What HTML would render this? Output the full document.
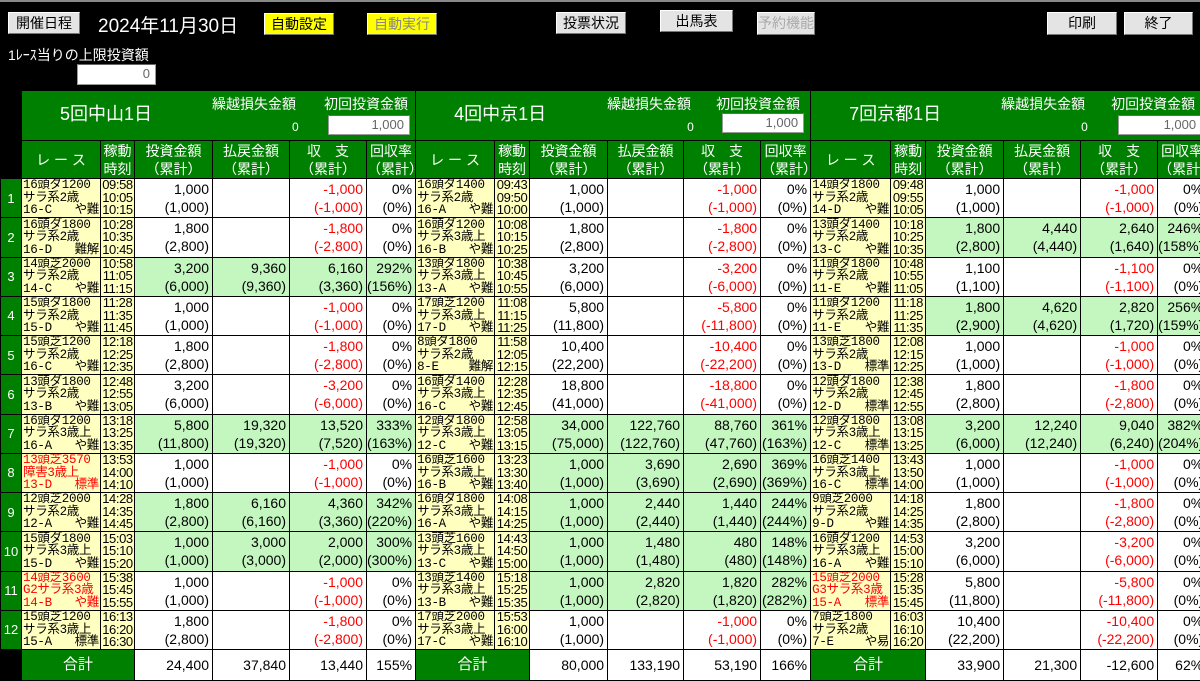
<!DOCTYPE html>
<html><head><meta charset="utf-8"><style>
*{box-sizing:border-box}
body{margin:0;width:1200px;height:679px;overflow:hidden;background:#000;font-family:"Liberation Sans","Noto Sans CJK JP",sans-serif;position:relative}
.btn{position:absolute;background:#e4e4e4;border:1px solid #fff;border-right-color:#777;border-bottom-color:#777;font-size:14px;text-align:center;line-height:20px;color:#000}
.y{background:#ffff00}
.wt{position:absolute;color:#fff}
.box{position:absolute;background:#fff;border:1px solid #999;border-top-color:#666;font-size:13px;text-align:right;padding-right:5px;color:#666;line-height:18px}
table{position:absolute;left:0;top:90px;border-collapse:collapse;table-layout:fixed;width:1206px}
td{border:1px solid #000;padding:0;overflow:hidden;white-space:nowrap}
.hd{background:#008000;color:#fff;text-align:center;font-size:14px;line-height:18px}
.no{background:#008000;color:#fff;text-align:center;font-size:13px}
.r{background:#ffffc0;font-family:"Liberation Mono","Noto Sans CJK JP",monospace;font-size:12.5px;line-height:12.5px;padding-left:1px;color:#000;letter-spacing:-0.3px}
.r span{float:right;padding-right:1px}
.rr{color:#f00}
.t{background:#ffffc0;font-size:13px;line-height:12.5px;text-align:center;letter-spacing:-0.4px}
.n,.ng{background:#fff;text-align:right;font-size:14px;line-height:18px;padding-right:3px}
.ng{background:#c4f7c0}
.m{color:#f00}
.tot{background:#fff;text-align:right;font-size:14px;padding-right:3px}
tr.row{height:39.25px}
.st{position:relative;height:49px}
</style></head><body>
<div style="position:absolute;left:0;top:0;width:1200px;height:2px;background:#888"></div>
<div class="btn" style="left:8px;top:12px;width:72px;height:22px">開催日程</div>
<div class="wt" style="left:98px;top:11px;font-size:19px">2024年11月30日</div>
<div class="btn y" style="left:264px;top:13px;width:70px;height:22px">自動設定</div>
<div class="btn y" style="left:367px;top:13px;width:70px;height:22px;color:#888">自動実行</div>
<div class="btn" style="left:556px;top:12px;width:70px;height:22px">投票状況</div>
<div class="btn" style="left:660px;top:10px;width:73px;height:22px">出馬表</div>
<div class="btn" style="left:757px;top:12px;width:58px;height:23px;color:#aaa">予約機能</div>
<div class="btn" style="left:1047px;top:12px;width:70px;height:23px">印刷</div>
<div class="btn" style="left:1124px;top:12px;width:69px;height:23px">終了</div>
<div class="wt" style="left:8px;top:45px;font-size:14px">1ﾚｰｽ当りの上限投資額</div>
<div class="box" style="left:77px;top:64px;width:79px;height:21px">0</div>

<table>
<colgroup><col style="width:21px">
<col style="width:79px"><col style="width:34px"><col style="width:78px"><col style="width:77px"><col style="width:77px"><col style="width:49px">
<col style="width:79px"><col style="width:35px"><col style="width:78px"><col style="width:76px"><col style="width:77px"><col style="width:50px">
<col style="width:80px"><col style="width:35px"><col style="width:78px"><col style="width:77px"><col style="width:77px"><col style="width:49px">
</colgroup>
<tr style="height:49px"><td style="background:#000;border-color:#000"></td>
<td colspan="6" class="hd"><div class="st"><div style="position:absolute;left:38px;top:14px;font-size:18px">5回中山1日</div><div style="position:absolute;left:190px;top:4px">繰越損失金額</div><div style="position:absolute;left:270px;top:27px;font-size:12px">0</div><div style="position:absolute;left:302px;top:4px">初回投資金額</div><div class="box" style="left:306px;top:24px;width:82px;height:20px">1,000</div></div></td>
<td colspan="6" class="hd"><div class="st"><div style="position:absolute;left:38px;top:14px;font-size:18px">4回中京1日</div><div style="position:absolute;left:191px;top:4px">繰越損失金額</div><div style="position:absolute;left:271px;top:27px;font-size:12px">0</div><div style="position:absolute;left:300px;top:4px">初回投資金額</div><div class="box" style="left:306px;top:22px;width:82px;height:20px">1,000</div></div></td>
<td colspan="6" class="hd"><div class="st"><div style="position:absolute;left:38px;top:14px;font-size:18px">7回京都1日</div><div style="position:absolute;left:190px;top:4px">繰越損失金額</div><div style="position:absolute;left:270px;top:27px;font-size:12px">0</div><div style="position:absolute;left:300px;top:4px">初回投資金額</div><div class="box" style="left:307px;top:24px;width:84px;height:20px">1,000</div></div></td>
</tr>
<tr style="height:38px"><td style="background:#000;border-color:#000"></td>
<td class="hd">レ ー ス</td><td class="hd">稼動<br>時刻</td><td class="hd">投資金額<br>（累計）</td><td class="hd">払戻金額<br>（累計）</td><td class="hd">収　支<br>（累計）</td><td class="hd">回収率<br>（累計）</td>
<td class="hd">レ ー ス</td><td class="hd">稼動<br>時刻</td><td class="hd">投資金額<br>（累計）</td><td class="hd">払戻金額<br>（累計）</td><td class="hd">収　支<br>（累計）</td><td class="hd">回収率<br>（累計）</td>
<td class="hd">レ ー ス</td><td class="hd">稼動<br>時刻</td><td class="hd">投資金額<br>（累計）</td><td class="hd">払戻金額<br>（累計）</td><td class="hd">収　支<br>（累計）</td><td class="hd">回収率<br>（累計）</td>
</tr>

<tr class="row"><td class="no">1</td>
<td class="r">16頭ダ1200<br>サラ系2歳<br>16-C<span>や難</span></td><td class="t">09:58<br>10:05<br>10:15</td><td class="n">1,000<br>(1,000)</td><td class="n"></td><td class="n m">-1,000<br>(-1,000)</td><td class="n">0%<br>(0%)</td>
<td class="r">16頭ダ1400<br>サラ系2歳<br>16-A<span>や難</span></td><td class="t">09:43<br>09:50<br>10:00</td><td class="n">1,000<br>(1,000)</td><td class="n"></td><td class="n m">-1,000<br>(-1,000)</td><td class="n">0%<br>(0%)</td>
<td class="r">14頭ダ1800<br>サラ系2歳<br>14-D<span>や難</span></td><td class="t">09:48<br>09:55<br>10:05</td><td class="n">1,000<br>(1,000)</td><td class="n"></td><td class="n m">-1,000<br>(-1,000)</td><td class="n">0%<br>(0%)</td></tr>

<tr class="row"><td class="no">2</td>
<td class="r">16頭ダ1800<br>サラ系2歳<br>16-D<span>難解</span></td><td class="t">10:28<br>10:35<br>10:45</td><td class="n">1,800<br>(2,800)</td><td class="n"></td><td class="n m">-1,800<br>(-2,800)</td><td class="n">0%<br>(0%)</td>
<td class="r">16頭ダ1200<br>サラ系3歳上<br>16-B<span>や難</span></td><td class="t">10:08<br>10:15<br>10:25</td><td class="n">1,800<br>(2,800)</td><td class="n"></td><td class="n m">-1,800<br>(-2,800)</td><td class="n">0%<br>(0%)</td>
<td class="r">13頭ダ1400<br>サラ系2歳<br>13-C<span>や難</span></td><td class="t">10:18<br>10:25<br>10:35</td><td class="ng">1,800<br>(2,800)</td><td class="ng">4,440<br>(4,440)</td><td class="ng">2,640<br>(1,640)</td><td class="ng">246%<br>(158%)</td></tr>

<tr class="row"><td class="no">3</td>
<td class="r">14頭芝2000<br>サラ系2歳<br>14-C<span>や難</span></td><td class="t">10:58<br>11:05<br>11:15</td><td class="ng">3,200<br>(6,000)</td><td class="ng">9,360<br>(9,360)</td><td class="ng">6,160<br>(3,360)</td><td class="ng">292%<br>(156%)</td>
<td class="r">13頭ダ1800<br>サラ系3歳上<br>13-A<span>や難</span></td><td class="t">10:38<br>10:45<br>10:55</td><td class="n">3,200<br>(6,000)</td><td class="n"></td><td class="n m">-3,200<br>(-6,000)</td><td class="n">0%<br>(0%)</td>
<td class="r">11頭ダ1800<br>サラ系2歳<br>11-E<span>や難</span></td><td class="t">10:48<br>10:55<br>11:05</td><td class="n">1,100<br>(1,100)</td><td class="n"></td><td class="n m">-1,100<br>(-1,100)</td><td class="n">0%<br>(0%)</td></tr>

<tr class="row"><td class="no">4</td>
<td class="r">15頭ダ1800<br>サラ系2歳<br>15-D<span>や難</span></td><td class="t">11:28<br>11:35<br>11:45</td><td class="n">1,000<br>(1,000)</td><td class="n"></td><td class="n m">-1,000<br>(-1,000)</td><td class="n">0%<br>(0%)</td>
<td class="r">17頭芝1200<br>サラ系3歳上<br>17-D<span>や難</span></td><td class="t">11:08<br>11:15<br>11:25</td><td class="n">5,800<br>(11,800)</td><td class="n"></td><td class="n m">-5,800<br>(-11,800)</td><td class="n">0%<br>(0%)</td>
<td class="r">11頭ダ1200<br>サラ系2歳<br>11-E<span>や難</span></td><td class="t">11:18<br>11:25<br>11:35</td><td class="ng">1,800<br>(2,900)</td><td class="ng">4,620<br>(4,620)</td><td class="ng">2,820<br>(1,720)</td><td class="ng">256%<br>(159%)</td></tr>

<tr class="row"><td class="no">5</td>
<td class="r">15頭芝1200<br>サラ系2歳<br>16-C<span>や難</span></td><td class="t">12:18<br>12:25<br>12:35</td><td class="n">1,800<br>(2,800)</td><td class="n"></td><td class="n m">-1,800<br>(-2,800)</td><td class="n">0%<br>(0%)</td>
<td class="r">8頭ダ1800<br>サラ系2歳<br>8-E<span>難解</span></td><td class="t">11:58<br>12:05<br>12:15</td><td class="n">10,400<br>(22,200)</td><td class="n"></td><td class="n m">-10,400<br>(-22,200)</td><td class="n">0%<br>(0%)</td>
<td class="r">13頭芝1800<br>サラ系2歳<br>13-D<span>標準</span></td><td class="t">12:08<br>12:15<br>12:25</td><td class="n">1,000<br>(1,000)</td><td class="n"></td><td class="n m">-1,000<br>(-1,000)</td><td class="n">0%<br>(0%)</td></tr>

<tr class="row"><td class="no">6</td>
<td class="r">13頭ダ1800<br>サラ系2歳<br>13-B<span>や難</span></td><td class="t">12:48<br>12:55<br>13:05</td><td class="n">3,200<br>(6,000)</td><td class="n"></td><td class="n m">-3,200<br>(-6,000)</td><td class="n">0%<br>(0%)</td>
<td class="r">16頭ダ1400<br>サラ系3歳上<br>16-C<span>や難</span></td><td class="t">12:28<br>12:35<br>12:45</td><td class="n">18,800<br>(41,000)</td><td class="n"></td><td class="n m">-18,800<br>(-41,000)</td><td class="n">0%<br>(0%)</td>
<td class="r">12頭ダ1800<br>サラ系2歳<br>12-D<span>標準</span></td><td class="t">12:38<br>12:45<br>12:55</td><td class="n">1,800<br>(2,800)</td><td class="n"></td><td class="n m">-1,800<br>(-2,800)</td><td class="n">0%<br>(0%)</td></tr>

<tr class="row"><td class="no">7</td>
<td class="r">16頭ダ1200<br>サラ系3歳上<br>16-A<span>や難</span></td><td class="t">13:18<br>13:25<br>13:35</td><td class="ng">5,800<br>(11,800)</td><td class="ng">19,320<br>(19,320)</td><td class="ng">13,520<br>(7,520)</td><td class="ng">333%<br>(163%)</td>
<td class="r">12頭ダ1800<br>サラ系3歳上<br>12-C<span>や難</span></td><td class="t">12:58<br>13:05<br>13:15</td><td class="ng">34,000<br>(75,000)</td><td class="ng">122,760<br>(122,760)</td><td class="ng">88,760<br>(47,760)</td><td class="ng">361%<br>(163%)</td>
<td class="r">12頭ダ1800<br>サラ系3歳上<br>12-C<span>標準</span></td><td class="t">13:08<br>13:15<br>13:25</td><td class="ng">3,200<br>(6,000)</td><td class="ng">12,240<br>(12,240)</td><td class="ng">9,040<br>(6,240)</td><td class="ng">382%<br>(204%)</td></tr>

<tr class="row"><td class="no">8</td>
<td class="r rr">13頭芝3570<br>障害3歳上<br>13-D<span>標準</span></td><td class="t">13:53<br>14:00<br>14:10</td><td class="n">1,000<br>(1,000)</td><td class="n"></td><td class="n m">-1,000<br>(-1,000)</td><td class="n">0%<br>(0%)</td>
<td class="r">16頭芝1600<br>サラ系3歳上<br>16-B<span>や難</span></td><td class="t">13:23<br>13:30<br>13:40</td><td class="ng">1,000<br>(1,000)</td><td class="ng">3,690<br>(3,690)</td><td class="ng">2,690<br>(2,690)</td><td class="ng">369%<br>(369%)</td>
<td class="r">16頭芝1400<br>サラ系3歳上<br>16-C<span>標準</span></td><td class="t">13:43<br>13:50<br>14:00</td><td class="n">1,000<br>(1,000)</td><td class="n"></td><td class="n m">-1,000<br>(-1,000)</td><td class="n">0%<br>(0%)</td></tr>

<tr class="row"><td class="no">9</td>
<td class="r">12頭芝2000<br>サラ系2歳<br>12-A<span>や難</span></td><td class="t">14:28<br>14:35<br>14:45</td><td class="ng">1,800<br>(2,800)</td><td class="ng">6,160<br>(6,160)</td><td class="ng">4,360<br>(3,360)</td><td class="ng">342%<br>(220%)</td>
<td class="r">16頭ダ1800<br>サラ系3歳上<br>16-A<span>や難</span></td><td class="t">14:08<br>14:15<br>14:25</td><td class="ng">1,000<br>(1,000)</td><td class="ng">2,440<br>(2,440)</td><td class="ng">1,440<br>(1,440)</td><td class="ng">244%<br>(244%)</td>
<td class="r">9頭芝2000<br>サラ系2歳<br>9-D<span>や難</span></td><td class="t">14:18<br>14:25<br>14:35</td><td class="n">1,800<br>(2,800)</td><td class="n"></td><td class="n m">-1,800<br>(-2,800)</td><td class="n">0%<br>(0%)</td></tr>

<tr class="row"><td class="no">10</td>
<td class="r">15頭ダ1800<br>サラ系3歳上<br>15-D<span>や難</span></td><td class="t">15:03<br>15:10<br>15:20</td><td class="ng">1,000<br>(1,000)</td><td class="ng">3,000<br>(3,000)</td><td class="ng">2,000<br>(2,000)</td><td class="ng">300%<br>(300%)</td>
<td class="r">13頭芝1600<br>サラ系3歳上<br>13-C<span>や難</span></td><td class="t">14:43<br>14:50<br>15:00</td><td class="ng">1,000<br>(1,000)</td><td class="ng">1,480<br>(1,480)</td><td class="ng">480<br>(480)</td><td class="ng">148%<br>(148%)</td>
<td class="r">16頭ダ1200<br>サラ系3歳上<br>16-A<span>や難</span></td><td class="t">14:53<br>15:00<br>15:10</td><td class="n">3,200<br>(6,000)</td><td class="n"></td><td class="n m">-3,200<br>(-6,000)</td><td class="n">0%<br>(0%)</td></tr>

<tr class="row"><td class="no">11</td>
<td class="r rr">14頭芝3600<br>G2サラ系3歳<br>14-B<span>や難</span></td><td class="t">15:38<br>15:45<br>15:55</td><td class="n">1,000<br>(1,000)</td><td class="n"></td><td class="n m">-1,000<br>(-1,000)</td><td class="n">0%<br>(0%)</td>
<td class="r">13頭芝1400<br>サラ系3歳上<br>13-B<span>や難</span></td><td class="t">15:18<br>15:25<br>15:35</td><td class="ng">1,000<br>(1,000)</td><td class="ng">2,820<br>(2,820)</td><td class="ng">1,820<br>(1,820)</td><td class="ng">282%<br>(282%)</td>
<td class="r rr">15頭芝2000<br>G3サラ系3歳<br>15-A<span>標準</span></td><td class="t">15:28<br>15:35<br>15:45</td><td class="n">5,800<br>(11,800)</td><td class="n"></td><td class="n m">-5,800<br>(-11,800)</td><td class="n">0%<br>(0%)</td></tr>

<tr class="row"><td class="no">12</td>
<td class="r">15頭芝1200<br>サラ系3歳上<br>15-A<span>標準</span></td><td class="t">16:13<br>16:20<br>16:30</td><td class="n">1,800<br>(2,800)</td><td class="n"></td><td class="n m">-1,800<br>(-2,800)</td><td class="n">0%<br>(0%)</td>
<td class="r">17頭芝2000<br>サラ系3歳上<br>17-C<span>や難</span></td><td class="t">15:53<br>16:00<br>16:10</td><td class="n">1,000<br>(1,000)</td><td class="n"></td><td class="n m">-1,000<br>(-1,000)</td><td class="n">0%<br>(0%)</td>
<td class="r">7頭芝1800<br>サラ系2歳<br>7-E<span>や易</span></td><td class="t">16:03<br>16:10<br>16:20</td><td class="n">10,400<br>(22,200)</td><td class="n"></td><td class="n m">-10,400<br>(-22,200)</td><td class="n">0%<br>(0%)</td></tr>

<tr style="height:31px"><td style="background:#000;border-color:#000"></td>
<td colspan="2" class="hd" style="font-size:15px">合計</td><td class="tot">24,400</td><td class="tot">37,840</td><td class="tot">13,440</td><td class="tot">155%</td>
<td colspan="2" class="hd" style="font-size:15px">合計</td><td class="tot">80,000</td><td class="tot">133,190</td><td class="tot">53,190</td><td class="tot">166%</td>
<td colspan="2" class="hd" style="font-size:15px">合計</td><td class="tot">33,900</td><td class="tot">21,300</td><td class="tot">-12,600</td><td class="tot">62%</td>
</tr>
</table>
</body></html>
